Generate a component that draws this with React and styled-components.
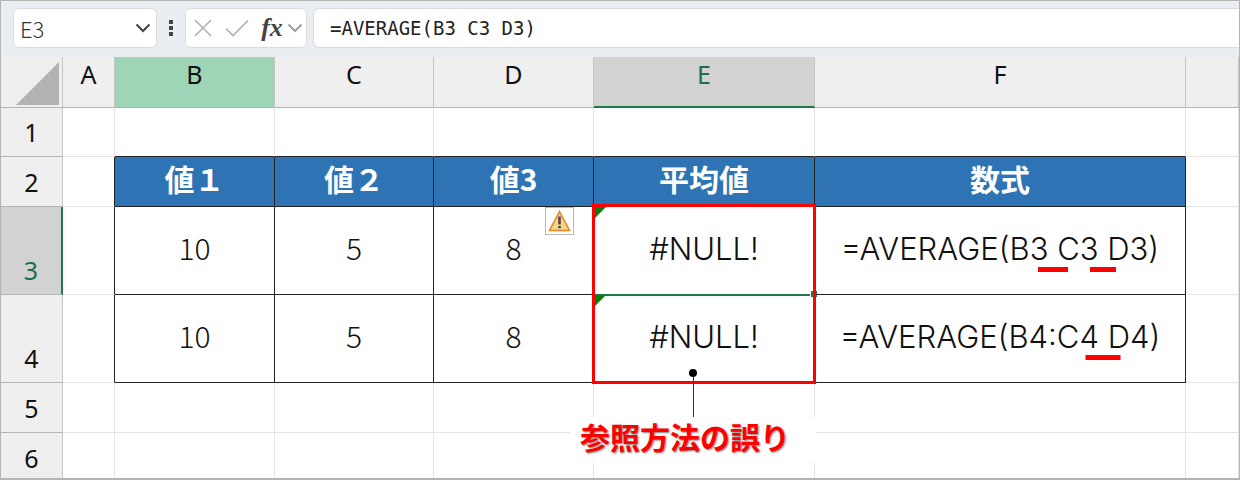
// src/App.jsx
import React from 'react';
import styled, { createGlobalStyle } from 'styled-components';

const GlobalStyle = createGlobalStyle`
  * {
    box-sizing: border-box;
  }

  body {
    margin: 0;
    background: #fff;
    font-family: 'Noto Sans CJK JP', sans-serif;
  }
`;

const Window = styled.div`
  height: 100vh;
  overflow: hidden;
  border: 1px solid #b4b4b4;
  border-bottom-width: 2px;
`;

const Toolbar = styled.div`
  display: flex;
  align-items: center;
  gap: 6px;
  height: 56px;
  padding: 0 0 2px 12px;
  background: #eaedf1;
`;

const Box = styled.div`
  display: flex;
  align-items: center;
  height: 40px;
  background: #fff;
  border: 1px solid #dcdcdc;
  border-radius: 6px;
`;

const NameBox = styled(Box)`
  width: 144px;
  padding: 0 4px 0 6px;
`;

const NameInput = styled.input`
  flex: 1;
  min-width: 0;
  padding: 0;
  border: 0;
  outline: 0;
  background: none;
  color: #333;
  font: 300 22px/30px 'Noto Sans CJK JP', sans-serif;
`;

const IconButton = styled.button`
  display: flex;
  align-items: center;
  justify-content: center;
  width: ${props => props.$width || 18}px;
  height: 30px;
  padding: 0;
  border: 0;
  background: none;
  color: ${props => props.$color || '#b0b0b0'};
`;

const Dots = styled.svg`
  width: 16px;
  height: 20px;
  fill: #444;
`;

const Actions = styled(Box)`
  width: 122px;
  padding: 0 1px 0 4px;
`;

const FxButton = styled(IconButton)`
  font: italic 700 26px/30px 'Liberation Serif', serif;
`;

const FormulaBox = styled(Box)`
  flex: 1;
  border-right: 0;
  border-radius: 6px 0 0 6px;
`;

const FormulaInput = styled.input`
  width: 100%;
  padding: 0 16px;
  border: 0;
  outline: 0;
  background: none;
  color: #222;
  font: 19px/30px 'DejaVu Sans Mono', monospace;
`;

const Sheet = styled.table`
  width: 100%;
  table-layout: fixed;
  border-collapse: separate;
  border-spacing: 0;
`;

const Col = styled.col`
  width: ${props => (props.$width ? `${props.$width}px` : 'auto')};
`;

const Row = styled.tr`
  height: ${props => props.$height}px;
`;

const Heading = styled.th`
  padding: 0;
  border-right: 1px solid #c4c4c4;
  border-bottom: 1px solid #b4b4b4;
  background: #efefef;
  color: #111;
  font: 400 25px/34px 'Noto Sans', sans-serif;
`;

const ColumnHeading = styled(Heading)`
  vertical-align: top;
  ${props => props.$marked && 'background: #9dd5b6;'}
  ${props =>
    props.$active &&
    'background: #d2d2d2; color: #1f6e47; border-bottom: 2px solid #1f7a4b;'}
`;

const RowHeading = styled(Heading)`
  padding-bottom: 7px;
  vertical-align: bottom;
  ${props =>
    props.$active &&
    'background: #d2d2d2; color: #1f6e47; border-right: 2px solid #1f7a4b;'}
`;

const Corner = styled(Heading)`
  padding: 3px 3px 0 0;
  line-height: 0;
  text-align: right;
`;

const Cell = styled.td`
  position: relative;
  padding: 0;
  border-right: 1px solid ${props => (props.$edgeRight ? '#222' : '#e4e4e4')};
  border-bottom: 1px solid ${props => (props.$edgeBottom ? '#222' : '#e4e4e4')};
`;

const TitleCell = styled(Cell)`
  padding-bottom: 8px;
  background: #2e74b5;
  color: #fff;
  font-size: 30px;
  font-weight: 700;
  line-height: 40px;
  text-align: center;
`;

const ValueCell = styled(Cell)`
  padding-bottom: 8px;
  color: #111;
  font-size: 30px;
  font-weight: 300;
  line-height: 40px;
  text-align: center;
  white-space: nowrap;
`;

const TextCell = styled(ValueCell)`
  padding-bottom: 4px;
  font-family: Inter, 'Noto Sans CJK JP', sans-serif;
  font-size: 31px;
`;

const Gap = styled.span`
  position: relative;

  &::after {
    content: '';
    position: absolute;
    top: 100%;
    left: 50%;
    width: ${props => props.$width}px;
    height: 5px;
    transform: translateX(-50%);
    background: #f00;
  }
`;

const ErrorFlag = styled.span`
  position: absolute;
  top: 0;
  left: 0;
  border-top: 12px solid #0b7d0b;
  border-right: 12px solid transparent;
`;

const WarningButton = styled.button`
  position: absolute;
  top: 0;
  right: 19px;
  display: flex;
  align-items: center;
  justify-content: center;
  width: 29px;
  height: 28px;
  padding: 0;
  border: 1px solid #b8b8b8;
  background: #fff;
`;

const Selection = styled.div`
  position: absolute;
  inset: -2px;
  border: 2px solid #1f7a4b;

  &::after {
    content: '';
    position: absolute;
    right: -3px;
    bottom: -3px;
    width: 6px;
    height: 6px;
    background: #1f7a4b;
    border-left: 1px solid #fff;
  }
`;

const RedFrame = styled.div`
  position: absolute;
  top: -3px;
  right: -2px;
  bottom: calc(-100% - 3px);
  left: -2px;
  z-index: 1;
  border: 3px solid #f00;
`;

const Callout = styled.div`
  position: absolute;
  top: 74px;
  right: -2px;
  left: -24px;
  z-index: 2;
  display: flex;
  flex-direction: column;
  align-items: center;
`;

const Dot = styled.span`
  width: 8px;
  height: 8px;
  border-radius: 50%;
  background: #000;
`;

const Stem = styled.span`
  width: 1px;
  height: 40px;
  background: #333;
`;

const Note = styled.strong`
  align-self: stretch;
  padding: 0 10px 8px;
  background: #fff;
  color: #f00;
  font-family: 'Noto Sans CJK JP', sans-serif;
  font-size: 30px;
  font-weight: 700;
  line-height: 38px;
  text-align: left;
  text-shadow: 1px 1px 2px rgba(0, 0, 0, 0.5);
`;

const Chevron = () => (
  <svg width="16" height="10" viewBox="0 0 16 10" fill="none" stroke="currentColor" strokeWidth="2">
    <path d="M1.5 1.5 8 8l6.5-6.5" />
  </svg>
);

const WarningIcon = () => (
  <svg width="23" height="22" viewBox="0 0 23 22">
    <path d="M11.5 1.5 21.5 20.5H1.5Z" fill="#f8d489" stroke="#e8862a" strokeWidth="1.6" />
    <path d="M10.2 6.5h2.6v8h-2.6zM10.2 16h2.6v2.2h-2.6z" fill="#4a4a4a" />
  </svg>
);

const columns = ['A', 'B', 'C', 'D', 'E', 'F', ''];
const widths = [62, 52, 160, 159, 160, 221, 371, 0];
const titles = ['値１', '値２', '値3', '平均値', '数式'];

const EmptyRow = ({ number, height, aboveTable }) => (
  <Row $height={height}>
    <RowHeading scope="row">{number}</RowHeading>
    {columns.map((name, index) => (
      <Cell key={index} $edgeBottom={aboveTable && index > 0 && name !== ''} />
    ))}
  </Row>
);

const App = () => {
  return (
    <Window>
      <GlobalStyle />
      <Toolbar>
        <NameBox>
          <NameInput aria-label="名前ボックス" defaultValue="E3" />
          <IconButton aria-label="名前の一覧" $color="#444">
            <Chevron />
          </IconButton>
        </NameBox>
        <Dots viewBox="0 0 16 20">
          <path d="M6 2h4v4H6zM6 8h4v4H6zM6 14h4v4H6z" />
        </Dots>
        <Actions>
          <IconButton aria-label="キャンセル" $width={26}>
            <svg width="18" height="18" viewBox="0 0 18 18" stroke="currentColor" strokeWidth="1.6">
              <path d="M1 1 17 17M17 1 1 17" />
            </svg>
          </IconButton>
          <IconButton aria-label="入力" $width={42}>
            <svg width="24" height="18" viewBox="0 0 24 18" fill="none" stroke="currentColor" strokeWidth="1.6">
              <path d="M1 9.5 8 16.5 23 1.5" />
            </svg>
          </IconButton>
          <FxButton aria-label="関数の挿入" $width={28} $color="#444">
            fx
          </FxButton>
          <IconButton aria-label="関数の一覧" $color="#a0a0a0">
            <Chevron />
          </IconButton>
        </Actions>
        <FormulaBox>
          <FormulaInput aria-label="数式バー" defaultValue="=AVERAGE(B3 C3 D3)" />
        </FormulaBox>
      </Toolbar>

      <Sheet>
        <colgroup>
          {widths.map((width, index) => (
            <Col key={index} $width={width} />
          ))}
        </colgroup>
        <thead>
          <Row $height={51}>
            <Corner>
              <svg width="43" height="43" viewBox="0 0 43 43">
                <path d="M43 0V43H0Z" fill="#b3b3b3" />
              </svg>
            </Corner>
            {columns.map((name, index) => (
              <ColumnHeading key={index} scope="col" $marked={name === 'B'} $active={name === 'E'}>
                {name}
              </ColumnHeading>
            ))}
          </Row>
        </thead>
        <tbody>
          <EmptyRow number={1} height={49} aboveTable />
          <Row $height={50}>
            <RowHeading scope="row">2</RowHeading>
            <Cell $edgeRight />
            {titles.map(title => (
              <TitleCell key={title} $edgeRight $edgeBottom>
                {title}
              </TitleCell>
            ))}
            <Cell />
          </Row>
          <Row $height={88}>
            <RowHeading scope="row" $active>3</RowHeading>
            <Cell $edgeRight />
            <ValueCell $edgeRight $edgeBottom>10</ValueCell>
            <ValueCell $edgeRight $edgeBottom>5</ValueCell>
            <ValueCell $edgeRight $edgeBottom>
              8
              <WarningButton aria-label="エラーチェック">
                <WarningIcon />
              </WarningButton>
            </ValueCell>
            <TextCell $edgeRight $edgeBottom>
              #NULL!
              <ErrorFlag />
              <Selection />
              <RedFrame />
            </TextCell>
            <TextCell $edgeRight $edgeBottom>
              =AVERAGE(B3<Gap $width={30}> </Gap>C3<Gap $width={26}> </Gap>D3)
            </TextCell>
            <Cell />
          </Row>
          <Row $height={88}>
            <RowHeading scope="row">4</RowHeading>
            <Cell $edgeRight />
            <ValueCell $edgeRight $edgeBottom>10</ValueCell>
            <ValueCell $edgeRight $edgeBottom>5</ValueCell>
            <ValueCell $edgeRight $edgeBottom>8</ValueCell>
            <TextCell $edgeRight $edgeBottom>
              #NULL!
              <ErrorFlag />
              <Callout>
                <Dot />
                <Stem />
                <Note>参照方法の誤り</Note>
              </Callout>
            </TextCell>
            <TextCell $edgeRight $edgeBottom>
              =AVERAGE(B4:C4<Gap $width={35}> </Gap>D4)
            </TextCell>
            <Cell />
          </Row>
          <EmptyRow number={5} height={50} />
          <EmptyRow number={6} height={50} />
        </tbody>
      </Sheet>
    </Window>
  );
};

export default App;
